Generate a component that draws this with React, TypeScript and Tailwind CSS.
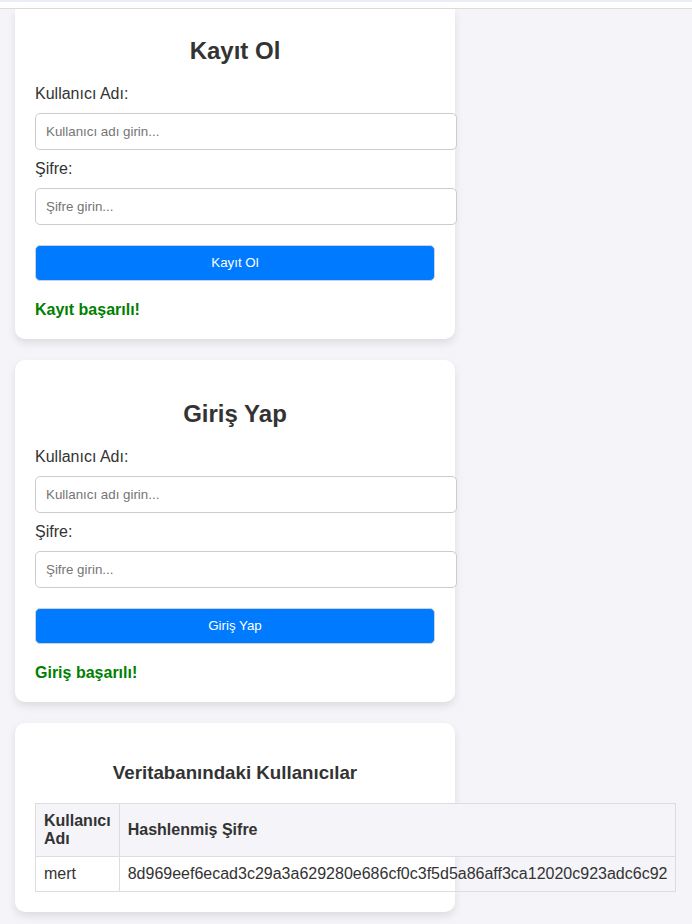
import React from "react";

const font = "font-['Liberation_Sans',Arial,sans-serif]";

function Field({ label, placeholder }: { label: string; placeholder: string }) {
  return (
    <div>
      <label className="block text-[16px] leading-[18px] text-[#333]">{label}</label>
      <input
        type="text"
        placeholder={placeholder}
        className="mt-[10px] mb-[10px] box-content block w-full px-[10px] py-[10px] text-[13.33px] leading-[15px] border border-[#ccc] rounded-[5px] bg-white placeholder:text-[#757575] outline-none"
      />
    </div>
  );
}

function AuthCard({
  title,
  button,
  message,
  first,
}: {
  title: string;
  button: string;
  message: string;
  first?: boolean;
}) {
  return (
    <div
      className={
        first
          ? "w-[440px] bg-white px-5 pt-[8px] pb-5 rounded-b-[10px] shadow-[0_4px_8px_rgba(0,0,0,0.1)]"
          : "w-[440px] bg-white p-5 rounded-[10px] shadow-[0_4px_8px_rgba(0,0,0,0.1)]"
      }
    >
      <h2 className="mt-5 mb-5 text-center text-[24px] leading-[28px] font-bold text-[#333]">{title}</h2>
      <Field label="Kullanıcı Adı:" placeholder="Kullanıcı adı girin..." />
      <Field label="Şifre:" placeholder="Şifre girin..." />
      <button className="mt-[20px] block w-full h-[36px] bg-[#007bff] text-white text-[13.33px] rounded-[5px] border border-[#c9d2de]">
        {button}
      </button>
      <p className="mt-5 text-[16px] leading-[18px] font-bold text-[#008000]">{message}</p>
    </div>
  );
}

export default function App() {
  return (
    <div className={`${font} min-h-screen bg-[#f4f4f9] text-[#333]`}>
      <div className="h-[9px] bg-white border-b border-[#dddddd]">
        <div className="h-[2px] bg-[#e9eef6]"></div>
      </div>
      <div className="ml-[15px] flex flex-col gap-[21px] pb-5">
        <AuthCard first title="Kayıt Ol" button="Kayıt Ol" message="Kayıt başarılı!" />
        <AuthCard title="Giriş Yap" button="Giriş Yap" message="Giriş başarılı!" />

        <div className="w-[440px] bg-white p-5 rounded-[10px] shadow-[0_4px_8px_rgba(0,0,0,0.1)]">
          <h3 className="mt-[19px] mb-[20px] text-center text-[18.72px] leading-[21px] font-bold text-[#333]">
            Veritabanındaki Kullanıcılar
          </h3>
          <table className="w-full border-collapse text-[16px] leading-[18px]">
            <thead>
              <tr className="bg-[#f4f4f9]">
                <th className="border border-[#ddd] p-2 text-left font-bold">Kullanıcı Adı</th>
                <th className="border border-[#ddd] p-2 text-left font-bold">Hashlenmiş Şifre</th>
              </tr>
            </thead>
            <tbody>
              <tr>
                <td className="border border-[#ddd] p-2">mert</td>
                <td className="border border-[#ddd] p-2">
                  8d969eef6ecad3c29a3a629280e686cf0c3f5d5a86aff3ca12020c923adc6c92
                </td>
              </tr>
            </tbody>
          </table>
        </div>
      </div>
    </div>
  );
}
